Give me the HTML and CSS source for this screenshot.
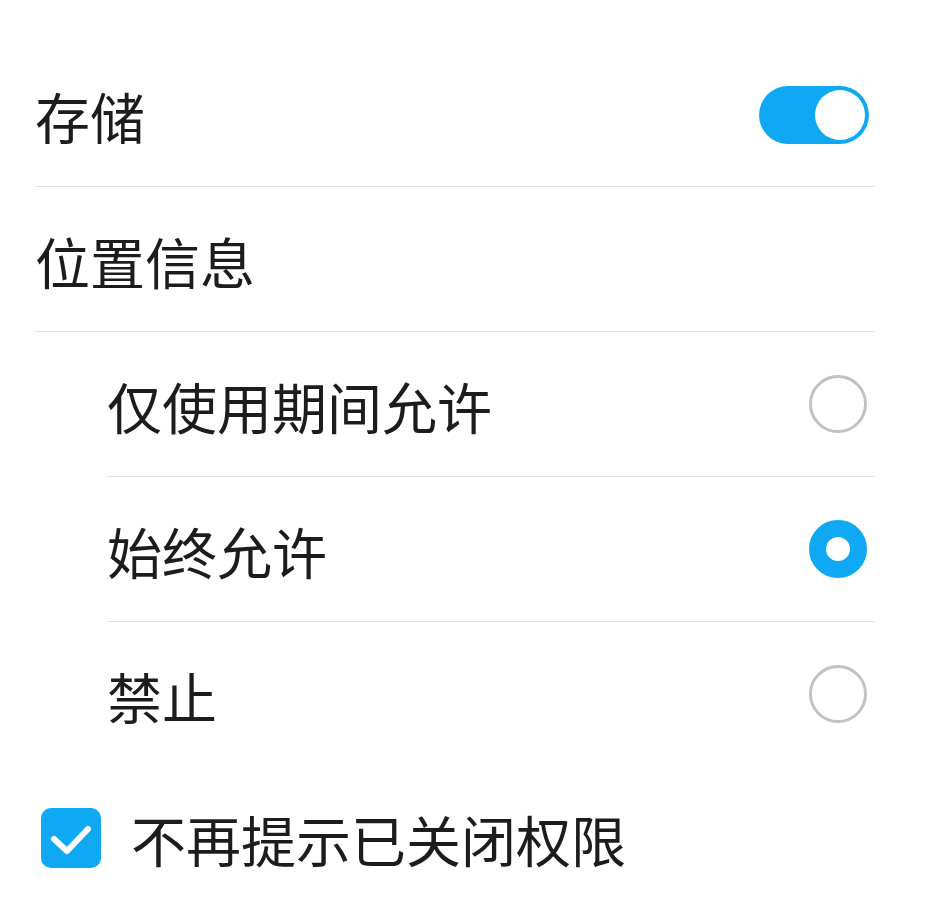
FILE: index.html
```html
<!DOCTYPE html>
<html lang="zh-CN">
<head>
<meta charset="utf-8">
<link rel="stylesheet" href="styles.css">
</head>
<body>
<div class="list">
  <div class="row">
    <span class="label">存储</span>
    <span class="switch"><span class="knob"></span></span>
  </div>
  <div class="row">
    <span class="label">位置信息</span>
  </div>
  <div class="sub">
    <div class="row">
      <span class="label">仅使用期间允许</span>
      <span class="radio"></span>
    </div>
    <div class="row">
      <span class="label">始终允许</span>
      <span class="radio checked"></span>
    </div>
    <div class="row last">
      <span class="label">禁止</span>
      <span class="radio"></span>
    </div>
  </div>
  <div class="check-row">
    <span class="checkbox">
      <svg width="60" height="60" viewBox="0 0 60 60"><path d="M13 31 L26 43 L47 21" fill="none" stroke="#fff" stroke-width="6" stroke-linecap="round" stroke-linejoin="round"/></svg>
    </span>
    <span class="label">不再提示已关闭权限</span>
  </div>
</div>
</body>
</html>
```
FILE: styles.css
```css
html, body {
  margin: 0;
  padding: 0;
  background: #ffffff;
}
body {
  font-family: "Noto Sans CJK SC", "Noto Sans", sans-serif;
  color: #1c1c1c;
}
.list {
  padding: 42px 55px 0 35px;
}
.row {
  height: 144px;
  border-bottom: 1px solid #e2e2e2;
  display: flex;
  align-items: center;
  justify-content: space-between;
  padding-right: 6px;
}
.row.last {
  border-bottom: none;
}
.sub {
  margin-left: 72px;
}
.sub .row {
  padding-right: 8px;
}
.label {
  font-size: 55px;
  line-height: 1;
  position: relative;
  top: 1px;
}
.switch {
  width: 110px;
  height: 58px;
  border-radius: 29px;
  background: #0fa8f3;
  display: flex;
  align-items: center;
  justify-content: flex-end;
  padding: 0 4px;
  box-sizing: border-box;
  margin-top: 1px;
}
.knob {
  width: 50px;
  height: 50px;
  border-radius: 50%;
  background: #ffffff;
}
.radio {
  width: 58px;
  height: 58px;
  border-radius: 50%;
  border: 3px solid #c2c2c2;
  box-sizing: border-box;
}
.radio.checked {
  border: 17px solid #0fa8f3;
}
.check-row {
  height: 143px;
  display: flex;
  align-items: center;
  padding-left: 6px;
}
.checkbox {
  width: 60px;
  height: 60px;
  border-radius: 10px;
  background: #0fa8f3;
  display: block;
  margin-right: 30px;
  margin-top: 1px;
}
.checkbox svg {
  display: block;
}
```
